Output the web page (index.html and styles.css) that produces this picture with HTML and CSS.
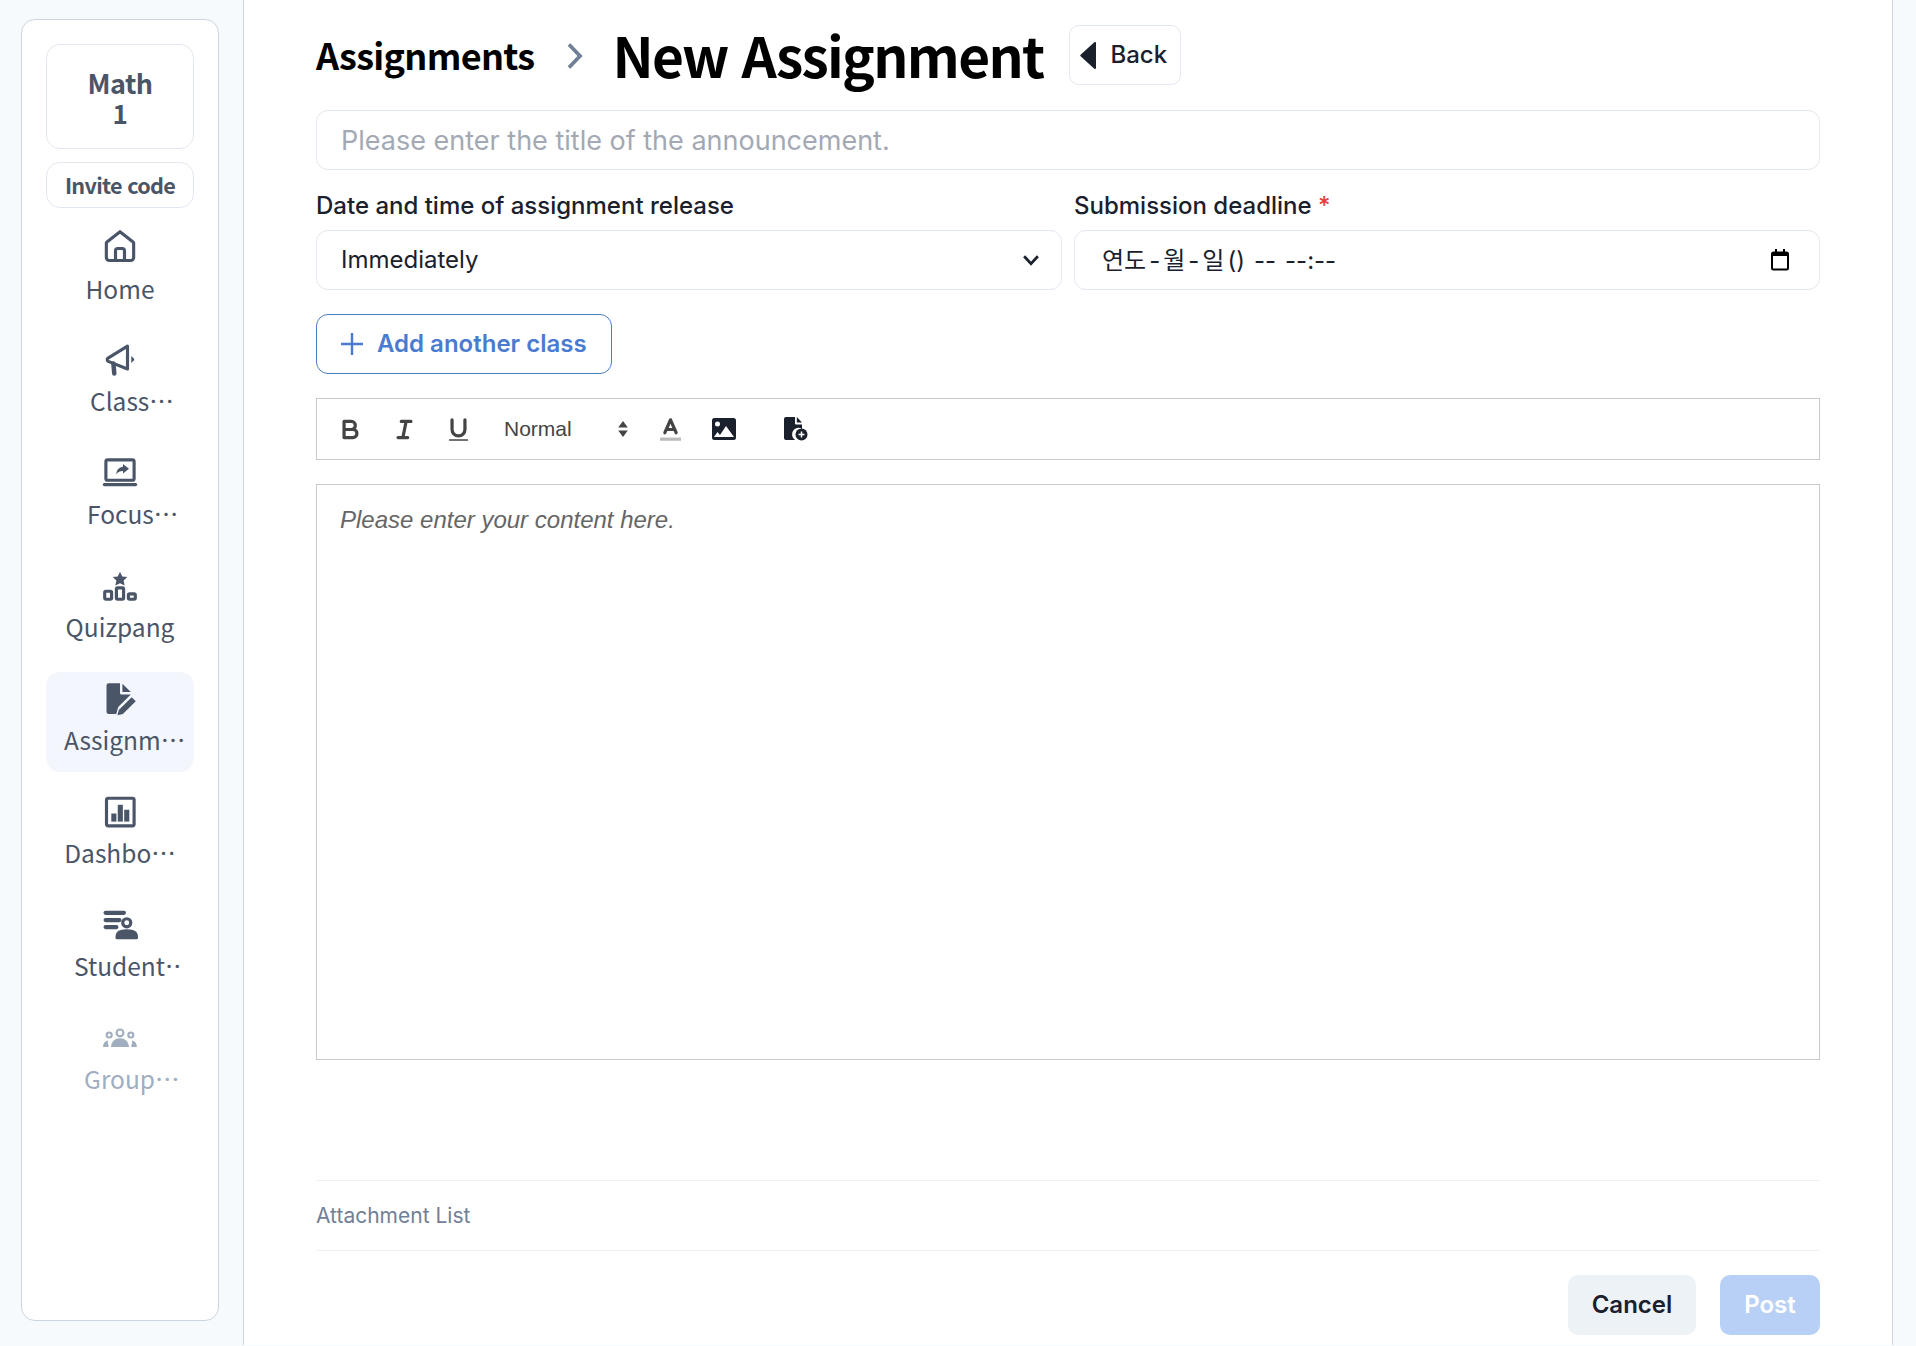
FILE: index.html
```html
<!DOCTYPE html>
<html lang="ko">
<head>
<meta charset="utf-8">
<title>New Assignment</title>
<link rel="stylesheet" href="styles.css">
</head>
<body>
<div class="page">
  <aside class="rail">
    <nav class="sidebar">
      <div class="class-card"><span>Math</span><span class="class-num">1</span></div>
      <div class="invite">Invite code</div>
      <a class="nav-item">
        <svg class="nav-icon" viewBox="0 0 24 24"><path class="ol" d="M12 1.800 20.700 8.600a1 1 0 0 1 .4.9V19a2 2 0 0 1-2 2H4.900a2 2 0 0 1-2-2V9.500a1 1 0 0 1 .4-.9z"/><path class="ol" d="M9 21v-6.500a1.500 1.500 0 0 1 1.500-1.500h3a1.500 1.500 0 0 1 1.500 1.500V21"/></svg>
        <span class="nav-label lbl-home">Home</span>
      </a>
      <a class="nav-item">
        <svg class="nav-icon" viewBox="0 0 24 24"><path class="ol" d="M17 2.800V18L4.200 12.900a1.300 1.300 0 0 1-.2-2.200z"/><path class="ol wide" d="M7.600 14.300 8.200 21"/><path class="fl" d="M19.500 9.400 21.200 11a1 1 0 0 1 0 1.400l-1.700 1.600z"/></svg>
        <span class="nav-label lbl-class">Class…</span>
      </a>
      <a class="nav-item">
        <svg class="nav-icon" viewBox="0 0 24 24"><rect class="ol" x="2.600" y="3.200" width="18.800" height="13.600" rx="1.200"/><rect class="fl" x=".5" y="18.600" width="23" height="2.200" rx="1.100"/><path class="fl" d="M14 6 18 9.200 14 12.400V10.600c-2 0-3.400.5-4.500 2.300.2-3 1.900-4.700 4.500-5z"/></svg>
        <span class="nav-label lbl-focus">Focus…</span>
      </a>
      <a class="nav-item">
        <svg class="nav-icon" viewBox="0 0 24 24"><path class="fl" d="m12 2.500 1.500 3.100 3.400.4-2.500 2.300.7 3.400L12 10.100 8.900 11.700l.7-3.400L7.100 6l3.400-.4z"/><rect class="ol" x="1.800" y="15.500" width="4.600" height="5.300" rx=".8"/><rect class="ol" x="9.600" y="13.200" width="4.800" height="7.600" rx=".8"/><rect class="ol" x="17.600" y="17.200" width="4.600" height="3.600" rx=".8"/></svg>
        <span class="nav-label">Quizpang</span>
      </a>
      <a class="nav-item is-active">
        <svg class="nav-icon" viewBox="0 0 24 24"><path class="fl" d="M4.500 1.500h7.500v6.500a1 1 0 0 0 1 1h6.200l-8.400 8.400-1.300 4.600H4.500a1.500 1.500 0 0 1-1.500-1.500V3a1.500 1.500 0 0 1 1.500-1.500zM13.600 1.800l5.600 5.600h-5.600z"/><path class="fl" d="m19.800 10.800 2.700 2.700-8.600 8.500-3.600.9.900-3.600z"/></svg>
        <span class="nav-label lbl-assign">Assignm…</span>
      </a>
      <a class="nav-item">
        <svg class="nav-icon" viewBox="0 0 24 24"><rect class="ol" x="3" y="2.800" width="18.400" height="18.400" rx="1"/><rect class="fl" x="6.200" y="13" width="3.400" height="5.400"/><rect class="fl" x="10.500" y="7.200" width="3.400" height="11.200"/><rect class="fl" x="14.800" y="10.500" width="3.400" height="7.900"/></svg>
        <span class="nav-label">Dashbo…</span>
      </a>
      <a class="nav-item">
        <svg class="nav-icon" viewBox="0 0 24 24"><rect class="fl" x="1" y="2.500" width="15" height="2.800" rx="1.400"/><rect class="fl" x="1" y="7.300" width="12" height="2.800" rx="1.400"/><rect class="fl" x="1" y="12" width="10" height="2.800" rx="1.400"/><circle class="ol" cx="16.500" cy="10.500" r="2.700"/><path class="fl" d="M9 20.500c0-3 .8-5.600 7.500-5.600s7.500 2.600 7.500 5.600a1 1 0 0 1-1 1H10a1 1 0 0 1-1-1z"/></svg>
        <span class="nav-label lbl-student">Student…</span>
      </a>
      <a class="nav-item is-disabled">
        <svg class="nav-icon" viewBox="0 0 24 24"><circle class="ol thin" cx="12" cy="8.600" r="2.300"/><circle class="ol thin" cx="4.800" cy="10" r="1.700"/><circle class="ol thin" cx="19.200" cy="10" r="1.700"/><path class="fl" d="M6 18c.3-3.700 2.700-5.800 6-5.800s5.700 2.100 6 5.800zM.7 18c.1-2.300 1.200-4 3.500-4.300C3.300 14.900 4.500 16.200 4.400 18zM23.300 18c-.1-2.300-1.200-4-3.500-4.300 .9 1.200-.3 2.500-.2 4.300z"/></svg>
        <span class="nav-label lbl-group">Group…</span>
      </a>
    </nav>
  </aside>

  <main class="main">
    <header class="head">
      <span class="crumb">Assignments</span>
      <svg class="crumb-sep" viewBox="0 0 17 26"><path d="M3 1.500 14 13 3 24.500"/></svg>
      <h1 class="title">New Assignment</h1>
      <button class="back" type="button">
        <svg class="back-icon" viewBox="0 0 16 27"><path d="M16 1v25a1 1 0 0 1-1.700.7L.6 14.200a1 1 0 0 1 0-1.400L14.300.300A1 1 0 0 1 16 1z"/></svg>
        <span class="back-text">Back</span>
      </button>
    </header>

    <input class="field title-input" type="text" placeholder="Please enter the title of the announcement.">

    <div class="two-col">
      <div class="col">
        <label class="lbl">Date and time of assignment release</label>
        <div class="field select">
          <span class="raise">Immediately</span>
          <svg class="chev" viewBox="0 0 16 16"><path d="M2.500 5 8 11l5.500-6"/></svg>
        </div>
      </div>
      <div class="col">
        <label class="lbl">Submission deadline <span class="req">*</span></label>
        <div class="field date">
          <span class="date-text"><span>연도</span><span>-</span><span>월</span><span>-</span><span>일</span><span>()</span><span class="date-time">--</span><span class="date-time">--:--</span></span>
          <svg class="cal" viewBox="0 0 20 22"><path d="M5 0h2v2.500h6V0h2v2.500h1.500A2.500 2.500 0 0 1 19 5v14a2.500 2.500 0 0 1-2.500 2.500h-13A2.500 2.500 0 0 1 1 19V5a2.500 2.500 0 0 1 2.500-2.500H5zM3 7v12a.5.5 0 0 0 .5.5h13a.5.5 0 0 0 .5-.5V7z"/></svg>
        </div>
      </div>
    </div>

    <button class="add-class" type="button">
      <svg class="plus" viewBox="0 0 24 24"><path d="M12 1v22M1 12h22"/></svg>
      <span class="raise">Add another class</span>
    </button>

    <div class="toolbar">
      <svg class="tb tb-b" viewBox="0 0 18 18"><path class="q" d="M5 4h4.500a2.500 2.500 0 0 1 0 5H5zM5 9h5.500a2.500 2.500 0 0 1 0 5H5z"/></svg>
      <svg class="tb tb-i" viewBox="0 0 18 18"><path class="q" d="M7 4h6M5 14h6M8 14 10 4"/></svg>
      <svg class="tb tb-u" viewBox="0 0 18 18"><path class="q" d="M5 3v6a4 4 0 0 0 4 4 4 4 0 0 0 4-4V3"/><rect class="qf" x="3" y="15" width="12" height="1" rx=".5"/></svg>
      <span class="tb-size">Normal</span>
      <svg class="tb-updown" viewBox="0 0 12 18"><path class="qf" d="M6 1 10.800 7.500H1.200zM6 17 1.200 10.500h9.600z"/></svg>
      <svg class="tb tb-color" viewBox="0 0 18 18"><path class="q" d="M5.500 11 9 3l3.500 8M11.600 9H6.400"/><path class="q-under" d="M2.500 15h13"/></svg>
      <svg class="tb-img" viewBox="0 0 24 22"><path class="dark" fill-rule="evenodd" d="M2.500 0h19A2.500 2.500 0 0 1 24 2.500v17a2.500 2.500 0 0 1-2.500 2.500h-19A2.500 2.500 0 0 1 0 19.500v-17A2.500 2.500 0 0 1 2.500 0zM5.500 3.500a2.500 2.500 0 1 0 0 5 2.500 2.500 0 0 0 0-5zM14 8l-6 9-2.500-3L2 19h20z"/></svg>
      <svg class="tb-file" viewBox="0 0 24 24"><path class="dark" d="M2 0h9v6.500a1 1 0 0 0 1 1h6v4.200a6.500 6.500 0 0 0-6.800 11.300H2a2 2 0 0 1-2-2V2a2 2 0 0 1 2-2zM12.800 0 18 5.500h-5.200z"/><circle class="dark" cx="17.500" cy="17.500" r="6"/><path class="plus-w" d="M17.500 14.500v6M14.500 17.500h6"/></svg>
    </div>

    <div class="editor"><em class="editor-ph">Please enter your content here.</em></div>

    <div class="attach">Attachment List</div>

    <footer class="actions">
      <button class="btn btn-cancel" type="button"><span class="raise">Cancel</span></button>
      <button class="btn btn-post" type="button"><span class="raise">Post</span></button>
    </footer>
  </main>
</div>
</body>
</html>
```

FILE: styles.css
```css
* { box-sizing: border-box; }
html, body { margin: 0; height: 100%; }
body { background: #f7fafc; font-family: Inter, "Noto Sans CJK KR", sans-serif; color: #1a202c; overflow: hidden; }
.page { display: flex; height: 1345px; }
.raise { display: block; margin-bottom: 2px; }

.rail { width: 243px; flex: none; padding: 19px 24px 24px 21px; }
.sidebar {
  height: 100%; display: flex; flex-direction: column; gap: 13px;
  padding: 24px 24px; background: #fff; border: 1px solid #cbd5e0; border-radius: 14px;
  font-family: "Noto Sans CJK KR", "Noto Sans", sans-serif; color: #4a5568;
}
.class-card {
  height: 105px; flex: none; display: flex; flex-direction: column; align-items: center; justify-content: center; padding-top: 2px;
  border: 1px solid #e2e8f0; border-radius: 14px; font-size: 27px; letter-spacing: -.5px; font-weight: 700; line-height: 30px;
}
.class-num { font-size: 26px; }
.invite {
  height: 46px; flex: none; display: flex; align-items: center; justify-content: center; padding-bottom: 2px;
  border: 1px solid #e2e8f0; border-radius: 14px; font-size: 21.600px; letter-spacing: -.7px; font-weight: 700; margin-bottom: -1px;
}
.nav-item { height: 100px; flex: none; border-radius: 14px; display: flex; flex-direction: column; align-items: center; padding-top: 9px; overflow: hidden; }
.nav-item.is-active { background: #f3f6fc; }
.nav-item.is-disabled { color: #a0aec0; }
.nav-icon { width: 36px; height: 36px; flex: none; }
.ol { fill: none; stroke: currentColor; stroke-width: 2.100; stroke-linejoin: round; stroke-linecap: round; }
.ol.thin { stroke-width: 1.400; }
.ol.wide { stroke-width: 3; }
.fl { fill: currentColor; }
.nav-label { font-size: 24.500px; line-height: 36px; margin-top: 5px; white-space: nowrap; align-self: stretch; text-align: center; overflow: hidden; }
.lbl-home { padding-top: 1px; }
.lbl-class, .lbl-focus, .lbl-group, .lbl-assign, .lbl-student { text-align: left; }
.lbl-class { padding-left: 44px; }
.lbl-focus { padding-left: 41px; }
.lbl-group { padding-left: 38px; }
.lbl-assign { padding-left: 18px; }
.lbl-student { padding-left: 28px; width: 134px; }

.main {
  width: 1650px; flex: none; background: #fff; border-left: 1px solid #cbd5e0; border-right: 1px solid #cbd5e0;
  padding: 25px 72px 10px; display: flex; flex-direction: column;
}
.head { display: flex; align-items: center; height: 60px; font-family: "Noto Sans CJK KR", sans-serif; color: #000; }
.crumb { font-size: 36px; font-weight: 700; letter-spacing: -.7px; margin-bottom: 2px; }
.crumb-sep { width: 17px; height: 26px; margin: 2px 29px 0 32px; fill: none; stroke: #718096; stroke-width: 3.800; }
.title { font-size: 55px; letter-spacing: -1.700px; font-weight: 700; margin: 0 26px 3px 0; line-height: 60px; }
.back {
  width: 112px; height: 60px; display: flex; align-items: center; gap: 14px; padding: 0 0 0 10px;
  background: #fff; border: 1px solid #e2e8f0; border-radius: 10px; font: 500 24px Inter, sans-serif; color: #1a202c;
}
.back-icon { width: 16px; height: 27px; fill: #1a202c; flex: none; }
.back-text { margin-bottom: 2px; }

.field {
  height: 60px; flex: none; border: 1px solid #e2e8f0; border-radius: 12px; background: #fff;
  font: 400 24px Inter, "Noto Sans CJK KR", sans-serif; color: #1a202c; padding: 0 24px; width: 100%;
}
.title-input { margin-top: 25px; outline: none; font-size: 27px; }
.title-input::placeholder { color: #a3a9b3; opacity: 1; }
.two-col { display: flex; gap: 12px; margin-top: 20px; }
.col { flex: 1 1 0; min-width: 0; display: flex; flex-direction: column; gap: 8px; }
.lbl { font-size: 24px; font-weight: 500; line-height: 32px; height: 32px; }
.req { color: #e53e3e; }
.select, .date { display: flex; align-items: center; justify-content: space-between; }
.chev { width: 20px; height: 20px; fill: none; stroke: #1a202c; stroke-width: 2.200; margin-right: -4px; }
.date { padding-left: 27px; }
.date-text { display: flex; align-items: baseline; gap: 3px; margin-bottom: 3px; }
.date-time { margin-left: 6px; }
.cal { width: 20px; height: 22px; fill: #000; margin-right: 5px; }

.add-class {
  width: 296px; height: 60px; margin-top: 24px; flex: none; display: flex; align-items: center; gap: 13px; padding: 0 0 0 23px;
  background: #fff; border: 1.500px solid #4a7fc4; border-radius: 12px; font: 600 24px Inter, sans-serif; color: #4a7bd0;
}
.plus { width: 24px; height: 24px; fill: none; stroke: #4a7bd0; stroke-width: 2.400; }

.toolbar { height: 62px; margin-top: 24px; flex: none; border: 1px solid #c8c8c8; display: flex; align-items: center; }
.tb { width: 29px; height: 29px; flex: none; }
.q { fill: none; stroke: #444; stroke-width: 2; stroke-linecap: round; stroke-linejoin: round; }
.qf { fill: #444; }
.q-under { fill: none; stroke: #bbb; stroke-width: 2; stroke-linecap: butt; }
.tb-b { margin-left: 19px; }
.tb-i { margin-left: 25px; }
.tb-u { margin-left: 25px; }
.tb-size { font: 400 21px "Liberation Sans", sans-serif; color: #444; margin-left: 31px; width: 68px; }
.tb-updown { width: 12px; height: 18px; margin-left: 45px; flex: none; }
.tb-color { margin-left: 27px; }
.tb-img { width: 24px; height: 22px; margin-left: 27px; flex: none; }
.tb-file { width: 24px; height: 24px; margin-left: 48px; flex: none; }
.dark { fill: #1a202c; }
.plus-w { fill: none; stroke: #fff; stroke-width: 1.500; }

.editor { height: 576px; margin-top: 24px; flex: none; border: 1px solid #c8c8c8; padding: 18px 23px; }
.editor-ph { font: italic 400 24px/1.4 "Liberation Sans", sans-serif; color: #666; }

.attach {
  margin-top: 120px; height: 71px; flex: none; display: flex; align-items: center;
  border-top: 1px solid #edf2f7; border-bottom: 1px solid #edf2f7;
  font-size: 21px; color: #718096;
}
.actions { display: flex; justify-content: flex-end; gap: 24px; margin-top: 24px; }
.btn { height: 60px; border: 0; border-radius: 10px; font: 600 24px Inter, sans-serif; }
.btn-cancel { width: 128px; background: #edf2f7; color: #1a202c; }
.btn-post { width: 100px; background: #b8d0f6; color: #fff; }
```
